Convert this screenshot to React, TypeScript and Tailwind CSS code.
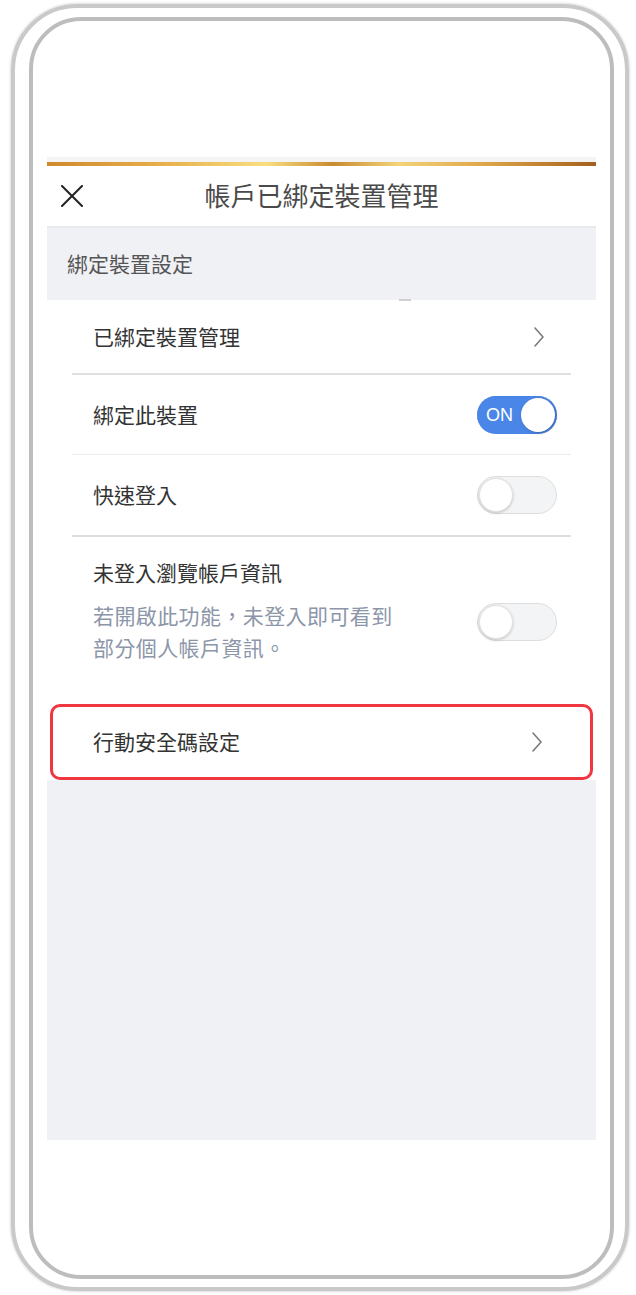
import React from 'react';

const font = { fontFamily: '"Noto Sans CJK TC", "Noto Sans", sans-serif' };

const Chevron: React.FC = () => (
  <svg width="12" height="22" viewBox="0 0 12 22" fill="none">
    <path d="M2 2 L10 11 L2 20" stroke="#7a7a7a" strokeWidth="1.6" strokeLinecap="round" strokeLinejoin="round" />
  </svg>
);

const Toggle: React.FC<{ on?: boolean }> = ({ on }) =>
  on ? (
    <div className="w-[80px] h-[38px] rounded-full bg-[#4a86e8] flex items-center justify-between pl-[9px] pr-[2px] shadow-[inset_0_0_1px_#3b6fc4]">
      <span className="text-white text-[18px] leading-none" style={{ fontFamily: '"Liberation Sans", Arial, sans-serif' }}>
        ON
      </span>
      <div className="w-[34px] h-[34px] rounded-full bg-white shadow-[1px_1px_3px_rgba(0,0,0,0.25)]" />
    </div>
  ) : (
    <div className="w-[80px] h-[38px] rounded-full bg-[#f3f4f6] border border-[#dedede] flex items-center pl-[1px]">
      <div className="w-[34px] h-[34px] rounded-full bg-white border border-[#e2e2e2] shadow-[0_1px_3px_rgba(0,0,0,0.2)]" />
    </div>
  );

export default function App() {
  return (
    <div className="w-[636px] h-[1295px] bg-white pt-[4px] pl-[11px]" style={font}>
      {/* outer device frame */}
      <div className="w-[618px] h-[1287px] rounded-[66px] border-[4px] border-[#c9c9c9] shadow-[0_0_3px_rgba(0,0,0,0.25)] pt-[9px] pl-[14px]">
        {/* inner device frame */}
        <div className="w-[585px] h-[1262px] rounded-[52px] border-[4px] border-[#bdbdbd] px-[14px] pt-[136px] flex flex-col">
          <div className="h-[5px] bg-[#f4f4f4]" />
          <div className="h-[4px] bg-[linear-gradient(90deg,#cf8a2e_0%,#e7ad4a_20%,#f8de80_40%,#c98a30_52%,#f3d37a_64%,#dfa548_80%,#a2601d_100%)]" />

          {/* header */}
          <div className="h-[62px] bg-white flex items-center border-b-[2px] border-[#e8e9ec]">
            <div className="pl-[13px]">
              <svg width="24" height="22" viewBox="0 0 24 22" fill="none">
                <path d="M2 1 L22 21 M22 1 L2 21" stroke="#222" strokeWidth="2" strokeLinecap="round" />
              </svg>
            </div>
            <div className="flex-1 text-center text-[26px] text-[#4a4a4a] leading-none pr-[37px] pb-[2px]">帳戶已綁定裝置管理</div>
          </div>

          {/* section title */}
          <div className="h-[72px] bg-[#f0f1f5] flex items-center pl-[20px] text-[21px] text-[#555]">綁定裝置設定</div>

          {/* list */}
          <div className="bg-white relative">
            <div className="absolute left-[352px] top-[-1px] w-[12px] h-[2px] bg-[#cfcfcf]" />
            <div className="mx-[25px]">
              <div className="h-[75px] flex items-center justify-between border-b-[2px] border-[#e0e0e0] pl-[21px] pr-[26px]">
                <span className="text-[21px] text-[#333]">已綁定裝置管理</span>
                <Chevron />
              </div>
              <div className="h-[80px] flex items-center justify-between border-b border-[#ececec] pl-[21px] pr-[14px]">
                <span className="text-[21px] text-[#333]">綁定此裝置</span>
                <Toggle on />
              </div>
              <div className="h-[82px] flex items-center justify-between border-b-[2px] border-[#dddddd] pl-[21px] pr-[14px]">
                <span className="text-[21px] text-[#333]">快速登入</span>
                <Toggle />
              </div>
              <div className="h-[152px] flex items-start justify-between pl-[21px] pr-[14px] pt-[20px]">
                <div>
                  <div className="text-[21px] text-[#333] leading-[30px]">未登入瀏覽帳戶資訊</div>
                  <div className="text-[21px] text-[#8c96a9] leading-[32px] mt-[12px] tracking-[0.4px]">
                    若開啟此功能，未登入即可看到
                    <br />
                    部分個人帳戶資訊。
                  </div>
                </div>
                <div className="mt-[46px]">
                  <Toggle />
                </div>
              </div>
            </div>
            <div className="h-[15px]" />
            <div className="mx-[3px] h-[76px] border-[3px] border-[#f0363f] rounded-[10px] flex items-center justify-between pl-[40px] pr-[47px]">
              <span className="text-[21px] text-[#333]">行動安全碼設定</span>
              <Chevron />
            </div>
          </div>

          <div className="h-[360px] bg-[#f0f1f5]" />
        </div>
      </div>
    </div>
  );
}
